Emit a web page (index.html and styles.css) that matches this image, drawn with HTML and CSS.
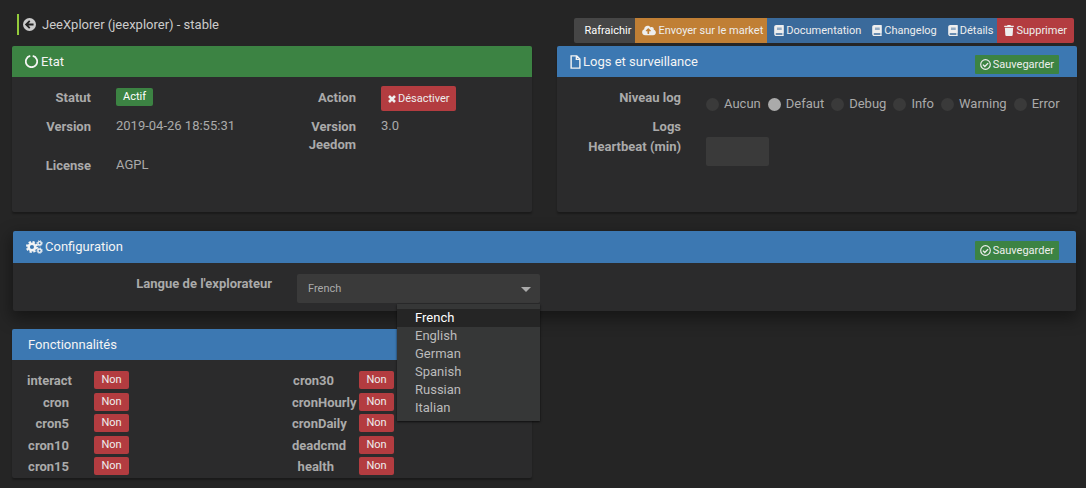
FILE: index.html
```html
<!DOCTYPE html>
<html lang="fr">
<head>
<meta charset="utf-8">
<meta name="viewport" content="width=device-width, initial-scale=1">
<title>JeeXplorer</title>
<link rel="stylesheet" href="styles.css">
</head>
<body>
<svg class="sprite" aria-hidden="true">
  <symbol id="book" viewBox="0 0 448 512"><path d="M448 360V24c0-13.300-10.700-24-24-24H96C43 0 0 43 0 96v320c0 53 43 96 96 96h328c13.300 0 24-10.700 24-24v-16c0-7.500-3.500-14.300-8.900-18.700-4.200-15.400-4.200-59.300 0-74.700 5.400-4.300 8.900-11.100 8.900-18.600zM128 134c0-3.300 2.700-6 6-6h212c3.300 0 6 2.700 6 6v20c0 3.300-2.700 6-6 6H134c-3.300 0-6-2.700-6-6v-20zm0 64c0-3.300 2.700-6 6-6h212c3.300 0 6 2.700 6 6v20c0 3.300-2.700 6-6 6H134c-3.300 0-6-2.700-6-6v-20zm253.400 250H96c-17.700 0-32-14.300-32-32 0-17.600 14.400-32 32-32h285.400c-1.900 17.100-1.900 46.900 0 64z"/></symbol>
  <symbol id="check" viewBox="0 0 16 16"><g fill="none" stroke="currentColor"><circle cx="8" cy="8" r="7" stroke-width="1.700"/><path d="M4.300 8.200 7 10.900l4.800-4.900" stroke-width="2"/></g></symbol>
</svg>

<header class="topbar">
  <h1 class="page-title">
    <a class="back" href="#" aria-label="Retour"><svg class="icon-13" viewBox="0 0 16 16"><circle cx="8" cy="8" r="8"/><path d="M13 8H4M8.300 3.500 3.800 8l4.500 4.500" fill="none" stroke="#252525" stroke-width="2.200"/></svg></a>
    JeeXplorer (jeexplorer) - stable
  </h1>
  <div class="actions">
    <button class="btn refresh">Rafraichir</button>
    <button class="btn market"><svg class="icon-14" viewBox="0 0 640 512"><path d="M537.600 226.600c4.100-10.700 6.400-22.400 6.400-34.600 0-53-43-96-96-96-19.700 0-38.100 6-53.300 16.200C367 64.200 315.300 32 256 32c-88.400 0-160 71.600-160 160 0 2.700.1 5.400.2 8.100C40.200 219.800 0 273.200 0 336c0 79.500 64.500 144 144 144h368c70.700 0 128-57.300 128-128 0-61.900-44-113.600-102.400-125.400zM393.400 288H328v112c0 8.800-7.200 16-16 16h-48c-8.800 0-16-7.200-16-16V288h-65.400c-14.300 0-21.400-17.200-11.300-27.300l105.400-105.400c6.200-6.200 16.400-6.200 22.600 0l105.400 105.400c10.100 10.100 2.900 27.300-11.300 27.300z"/></svg>Envoyer sur le market</button>
    <a class="btn info" href="#"><svg class="icon-10"><use href="#book"/></svg>Documentation</a>
    <a class="btn info" href="#"><svg class="icon-10"><use href="#book"/></svg>Changelog</a>
    <button class="btn info"><svg class="icon-10"><use href="#book"/></svg>Détails</button>
    <button class="btn danger last"><svg class="icon-10" viewBox="0 0 448 512"><path d="M432 32H312l-9.400-18.700A24 24 0 0 0 281.100 0H166.800a23.700 23.700 0 0 0-21.400 13.300L136 32H16A16 16 0 0 0 0 48v32a16 16 0 0 0 16 16h416a16 16 0 0 0 16-16V48a16 16 0 0 0-16-16zM53.200 467a48 48 0 0 0 47.900 45h245.800a48 48 0 0 0 47.900-45L416 128H32z"/></svg>Supprimer</button>
  </div>
</header>

<main class="page">
  <section class="panel tall">
    <h2 class="panel-head green"><svg class="icon-13" viewBox="0 0 16 16"><path d="M9.500 1.200A7 7 0 1 1 6.500 1.200" fill="none" stroke="currentColor" stroke-width="2.200"/></svg>Etat</h2>
    <div class="state">
      <div class="state-row first">
        <span class="name">Statut</span><span><span class="badge green">Actif</span></span>
        <span class="name">Action</span><span><button class="btn danger rounded"><svg class="icon-8" viewBox="0 0 16 16"><path d="m2 2 12 12M14 2 2 14" stroke="currentColor" stroke-width="5"/></svg>Désactiver</button></span>
      </div>
      <div class="state-row second">
        <span class="name">Version</span><span>2019-04-26 18:55:31</span>
        <span class="name">Version Jeedom</span><span>3.0</span>
      </div>
      <div class="state-row">
        <span class="name">License</span><span>AGPL</span>
      </div>
    </div>
  </section>

  <section class="panel tall">
    <h2 class="panel-head blue tight"><svg class="icon-file" viewBox="0 0 12 16"><path d="M1 1h6.500L11 4.500V15H1zM7 1v4h4" fill="none" stroke="currentColor" stroke-width="1.600"/></svg>Logs et surveillance<button class="save"><svg class="icon-11"><use href="#check"/></svg>Sauvegarder</button></h2>
    <div class="logs">
      <span class="name" id="level">Niveau log</span>
      <div class="radios" role="radiogroup" aria-labelledby="level">
        <label><input type="radio" name="level">Aucun</label>
        <label><input type="radio" name="level" checked>Defaut</label>
        <label><input type="radio" name="level">Debug</label>
        <label><input type="radio" name="level">Info</label>
        <label><input type="radio" name="level">Warning</label>
        <label><input type="radio" name="level">Error</label>
      </div>
      <span class="name">Logs</span><span></span>
      <label class="name" for="heartbeat">Heartbeat (min)</label>
      <input class="field" id="heartbeat" type="text">
    </div>
  </section>

  <section class="panel config">
    <h2 class="panel-head blue tight"><svg class="icon-cogs" viewBox="0 0 20 16"><g fill="none" stroke="currentColor"><circle cx="7" cy="8" r="3.900" stroke-width="3"/><circle cx="7" cy="8" r="6" stroke-width="2.200" stroke-dasharray="2.700 2.012"/><circle cx="16" cy="3.700" r="2" stroke-width="1.700"/><circle cx="16" cy="3.700" r="3.100" stroke-width="1.100" stroke-dasharray="1.400 1.035"/><circle cx="16" cy="12.300" r="2" stroke-width="1.700"/><circle cx="16" cy="12.300" r="3.100" stroke-width="1.100" stroke-dasharray="1.400 1.035"/></g></svg>Configuration<button class="save"><svg class="icon-11"><use href="#check"/></svg>Sauvegarder</button></h2>
    <div class="config-body">
      <label class="name" for="lang">Langue de l'explorateur</label>
      <div class="picker">
        <select class="field select" id="lang">
          <option>French</option><option>English</option><option>German</option><option>Spanish</option><option>Russian</option><option>Italian</option>
        </select>
        <svg class="caret" viewBox="0 0 10 5"><path d="M0 0h10L5 5z"/></svg>
        <ul class="menu" role="listbox" aria-label="Langue">
          <li class="current" role="option" aria-selected="true">French</li>
          <li role="option">English</li>
          <li role="option">German</li>
          <li role="option">Spanish</li>
          <li role="option">Russian</li>
          <li role="option">Italian</li>
        </ul>
      </div>
    </div>
  </section>

  <section class="panel">
    <h2 class="panel-head blue indent">Fonctionnalités</h2>
    <div class="features">
      <span class="name">interact</span><span class="badge red">Non</span><span class="name">cron30</span><span class="badge red">Non</span>
      <span class="name">cron</span><span class="badge red">Non</span><span class="name">cronHourly</span><span class="badge red">Non</span>
      <span class="name">cron5</span><span class="badge red">Non</span><span class="name">cronDaily</span><span class="badge red">Non</span>
      <span class="name">cron10</span><span class="badge red">Non</span><span class="name">deadcmd</span><span class="badge red">Non</span>
      <span class="name">cron15</span><span class="badge red">Non</span><span class="name">health</span><span class="badge red">Non</span>
    </div>
  </section>
</main>
</body>
</html>
```
FILE: styles.css
```css
* { box-sizing: border-box; }

body {
  margin: 0;
  background: #252525;
  color: #aaa;
  font: 13px/18px Roboto, sans-serif;
}

button, input, select { font-family: inherit; }
svg { flex: none; fill: currentColor; }
.sprite { position: absolute; width: 0; height: 0; }

.icon-8 { width: 8px; height: 8px; }
.icon-10 { width: 10px; height: 11px; }
.icon-11 { width: 11px; height: 11px; }
.icon-13 { width: 13px; height: 13px; }
.icon-14 { width: 14px; height: 11px; }
.icon-file { width: 11px; height: 14px; }
.icon-cogs { width: 17px; height: 14px; }

.topbar {
  display: flex;
  justify-content: space-between;
  align-items: flex-start;
  padding: 14px 12px 3px 17px;
}

.page-title {
  display: flex;
  align-items: center;
  gap: 6px;
  height: 21px;
  margin: 0;
  padding-left: 4px;
  border-left: 2px solid #93ca3b;
  color: #ccc;
  font-size: 13px;
  font-weight: 400;
}

.back { display: flex; color: #ccc; }

.actions { display: flex; padding-top: 4px; }

.btn {
  display: inline-flex;
  align-items: center;
  gap: 2px;
  height: 25px;
  padding: 0 4px 0 7px;
  border: 0;
  color: #eee;
  font-size: 11px;
  line-height: 18px;
  text-decoration: none;
  white-space: nowrap;
}

.refresh { padding-left: 10px; background: #464646; border-radius: 2px 0 0 2px; color: #fff; }
.market { background: #c07f35; }
.info { background: #3a6a9b; }
.danger { background: #b33c40; }
.last { padding-right: 7px; border-radius: 0 2px 2px 0; }
.rounded { padding-right: 6px; border-radius: 2px; }

.page {
  display: grid;
  grid-template-columns: 1fr 1fr;
  gap: 18px 25px;
  padding: 0 9px 10px 12px;
}

.panel {
  background: #2b2b2c;
  border-radius: 2px;
  box-shadow: 0 2px 2px rgba(0, 0, 0, .3);
}

.tall { min-height: 166px; }

.panel-head {
  display: flex;
  align-items: center;
  gap: 3px;
  height: 31px;
  margin: 0;
  padding: 0 18px 0 13px;
  border-radius: 2px 2px 0 0;
  color: #f4f4f4;
  font-size: 13px;
  font-weight: 400;
}

.tight { gap: 2px; }
.green { background: #3c8343; }
.blue { background: #3c78b2; }
.red { background: #b33c40; }
.indent { padding-left: 16px; }

.save {
  display: flex;
  align-items: center;
  align-self: flex-end;
  gap: 2px;
  height: 19px;
  margin: 0 0 3px auto;
  padding: 0 5px;
  border: 0;
  border-radius: 1px;
  background: #3c8343;
  color: #eee;
  font-size: 11px;
}

.name { padding-top: 1px; font-weight: 700; text-align: right; }

.badge {
  display: block;
  width: fit-content;
  min-width: 35px;
  height: 18px;
  padding: 0 7px;
  border-radius: 2px;
  color: #fff;
  font-size: 11px;
  line-height: 18px;
  text-align: center;
}

.red { color: #eee; }

.state { padding-top: 9px; }

.state-row {
  display: grid;
  grid-template-columns: 79fr 150fr 65fr 151fr;
  column-gap: 25px;
  margin-bottom: 2px;
}

.first { align-items: start; margin-bottom: 6px; }
.first .name, .first .badge { margin-top: 2px; }
.first .btn { display: flex; }

.logs {
  display: grid;
  grid-template-columns: 124fr 371fr;
  gap: 1px 25px;
  padding-top: 11px;
}

.radios { display: flex; gap: 7px; padding: 7px 0 3px; white-space: nowrap; }
.radios label { display: flex; align-items: center; gap: 5px; }

.radios input {
  width: 13px;
  height: 13px;
  margin: 0;
  appearance: none;
  border-radius: 50%;
  background: #3a3a3a;
}

.radios input:checked { background: #aaa; }

.field {
  width: 63px;
  height: 29px;
  border: 0;
  border-radius: 2px;
  background: #3a3a3a;
  color: #aaa;
  font-size: 11px;
}

.config {
  grid-column: 1 / -1;
  margin: 1px;
  margin-bottom: 0;
  box-shadow: 0 6px 16px 2px rgba(0, 0, 0, .4);
}

.config .panel-head { height: 32px; padding-right: 17px; }

.config-body {
  display: grid;
  grid-template-columns: 259fr 243fr 511fr;
  column-gap: 25px;
  padding: 11px 0 8px;
}

.picker { position: relative; display: flex; }
.select { width: 100%; padding: 0 11px; appearance: none; }

.caret {
  position: absolute;
  top: 13px;
  right: 9px;
  width: 10px;
  height: 5px;
  pointer-events: none;
}

.menu {
  position: absolute;
  z-index: 1;
  top: 30px;
  right: 0;
  width: 143px;
  margin: 0;
  padding: 5px 0 4px;
  background: #363737;
  box-shadow: 0 1px 2px rgba(0, 0, 0, .7);
  list-style: none;
}

.menu li { padding: 0 18px; color: #bbb; }
.menu .current { background: #252525; color: #fff; }

.features {
  display: grid;
  grid-template-columns: 42px 1fr 42px 1fr;
  column-gap: 25px;
  align-content: space-between;
  min-height: 118px;
  padding: 11px 0 2px 15px;
}

.features .name { white-space: nowrap; }
```
